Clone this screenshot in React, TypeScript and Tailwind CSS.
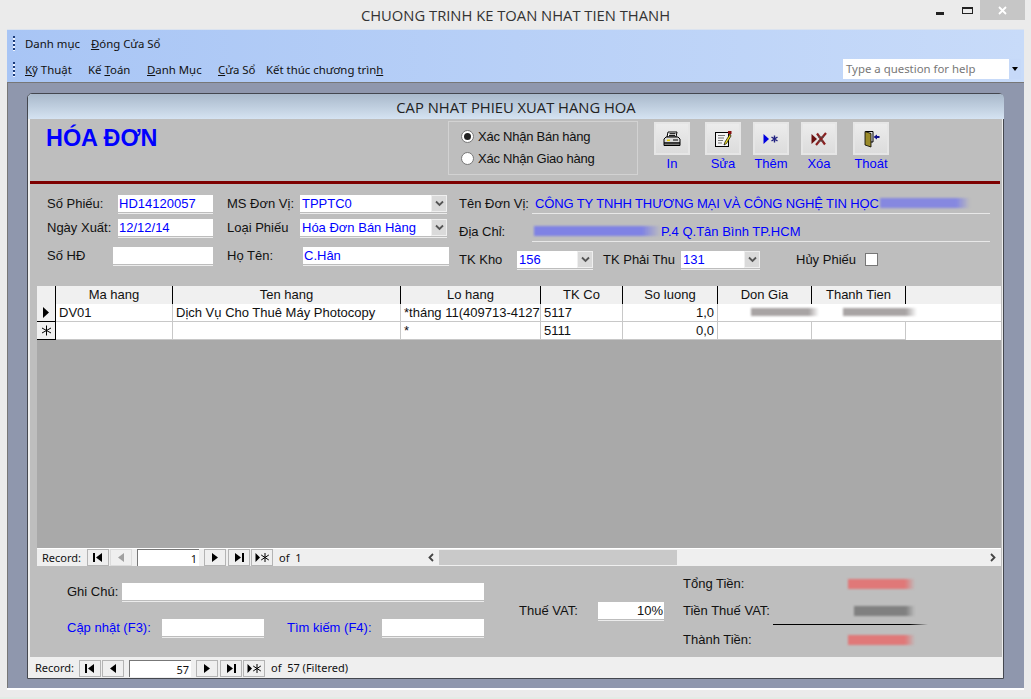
import React from "react";

const Field = ({ w, value, right, dark }: { w: number; value?: string; right?: boolean; dark?: boolean }) => (
  <div className="shrink-0" style={{ width: w }}>
    <div className={`h-[17px] bg-white px-[1px] leading-[17px] overflow-hidden whitespace-nowrap ${dark ? "text-[#111]" : "text-[#0000ff]"} ${right ? "text-right" : ""}`}>{value}</div>
    <div className="h-[1px] bg-[#bdbdbd]" />
    <div className="h-[1px] bg-[#ececec]" />
  </div>
);

const Combo = ({ w, value }: { w: number; value: string }) => (
  <div className="shrink-0" style={{ width: w }}>
    <div className="h-[17px] bg-white flex justify-between text-[#0000ff] leading-[17px]">
      <span className="pl-[2px] overflow-hidden whitespace-nowrap">{value}</span>
      <span className="w-[16px] h-[17px] bg-[#dadada] border border-[#efefef] flex items-center justify-center shrink-0">
        <svg width="9" height="7" viewBox="0 0 9 7"><path d="M1 1.5 L4.5 5 L8 1.5" fill="none" stroke="#555" strokeWidth="1.8" /></svg>
      </span>
    </div>
    <div className="h-[1px] bg-[#bdbdbd]" />
    <div className="h-[1px] bg-[#ececec]" />
  </div>
);

const NavIcon = ({ kind, dim }: { kind: string; dim?: boolean }) => {
  const c = dim ? "#a0a0a0" : "#000";
  return (
    <svg width="14" height="11" viewBox="0 0 14 11">
      {kind === "first" && <><rect x="2" y="1" width="2" height="9" fill={c} /><path d="M11 1 L5 5.5 L11 10 Z" fill={c} /></>}
      {kind === "prev" && <path d="M10 1 L4 5.5 L10 10 Z" fill={c} />}
      {kind === "next" && <path d="M4 1 L10 5.5 L4 10 Z" fill={c} />}
      {kind === "last" && <><path d="M3 1 L9 5.5 L3 10 Z" fill={c} /><rect x="10" y="1" width="2" height="9" fill={c} /></>}
      {kind === "new" && <><path d="M0.5 1 L5 5.5 L0.5 10 Z" fill={c} /><path d="M10 1 V10 M6.2 3 L13.8 8 M13.8 3 L6.2 8" stroke={c} strokeWidth="1" /></>}
    </svg>
  );
};

const NavBtn = ({ kind, dim, bare }: { kind: string; dim?: boolean; bare?: boolean }) => (
  <div className={`w-[22px] h-[17px] shrink-0 border bg-[#efefef] flex items-center justify-center ${bare ? "border-[#dcdcdc]" : "border-[#b4b4b4]"}`}>
    <NavIcon kind={kind} dim={dim} />
  </div>
);

const Nav = ({ cur, of, dim, labelW }: { cur: string; of: string; dim?: boolean; labelW: number }) => (
  <div className="flex items-center text-[11px] text-[#111]" style={{ fontFamily: '"Noto Sans", sans-serif' }}>
    <span className="shrink-0 whitespace-nowrap" style={{ width: labelW }}>Record:</span>
    <NavBtn kind="first" />
    <div className="w-[1px]" />
    <NavBtn kind="prev" dim={dim} bare={dim} />
    <div className="w-[5px]" />
    <div className="w-[62px] h-[17px] bg-white border-l border-t border-[#777] text-right pr-[2px] leading-[18px]">{cur}</div>
    <div className="w-[5px]" />
    <NavBtn kind="next" />
    <div className="w-[2px]" />
    <NavBtn kind="last" />
    <div className="w-[1px]" />
    <NavBtn kind="new" />
    <span className="ml-[6px] whitespace-pre">{of}</span>
  </div>
);

const Smear = ({ w, h, c, ml = 0, mt = 0 }: { w: number; h: number; c: string; ml?: number; mt?: number }) => (
  <div
    className="blur-[1px] shrink-0"
    style={{ width: w, height: h, marginLeft: ml, marginTop: mt, background: `linear-gradient(to right, ${c}, ${c} 85%, transparent)` }}
  />
);

const ToolBtn = ({ label, ml, children }: { label: string; ml: number; children: React.ReactNode }) => (
  <div className="w-[36px] shrink-0 flex flex-col items-center" style={{ marginLeft: ml }}>
    <div className="w-[36px] h-[33px] border-2 border-[#e6e6e6] bg-gradient-to-b from-[#ececec] to-[#dcdcdc] flex items-center justify-center">{children}</div>
    <span className="text-[#0000ff] mt-[1px] leading-[16px] whitespace-nowrap">{label}</span>
  </div>
);

const Grip = () => (
  <div className="w-[2px] h-[15px] mr-[10px] shrink-0 bg-[repeating-linear-gradient(to_bottom,#1a3a7a_0px,#1a3a7a_2px,#eef3ff_2px,#eef3ff_4px)]" />
);

const cols = "grid grid-cols-[19px_117px_228px_140px_82px_95px_94px_94px_95px]";

const Cell = ({ children, right }: { children?: React.ReactNode; right?: boolean }) => (
  <div className={`border-r border-b border-[#c8c8c8] px-[3px] overflow-hidden whitespace-nowrap ${right ? "text-right" : ""}`}>{children}</div>
);

const Head = ({ children, last }: { children?: React.ReactNode; last?: boolean }) => (
  <div className={`text-center bg-[#f0f0f0] ${last ? "" : "border-r border-black"}`}>{children}</div>
);

export default function App() {
  return (
    <div className="w-[1031px] h-[699px] overflow-hidden bg-[#ebebeb] text-black" style={{ fontFamily: '"Liberation Sans", sans-serif' }}>
      {/* title bar */}
      <div className="h-[29px] relative flex justify-center items-center text-[#333] text-[14.75px]" style={{ fontFamily: '"Open Sans", sans-serif' }}>
        <span className="pt-[1px]">CHUONG TRINH KE TOAN NHAT TIEN THANH</span>
        <div className="absolute right-[6px] top-0 flex items-start">
          <div className="w-[8px] h-[3px] bg-[#222] mt-[12px] mr-[18px]" />
          <div className="w-[11px] h-[7px] border border-[#222] border-t-2 mt-[7px] mr-[7px]" />
          <div className="w-[45px] h-[20px] bg-[#c6c6c6] flex items-center justify-center">
            <svg width="9" height="9" viewBox="0 0 9 9"><path d="M1 1 L8 8 M8 1 L1 8" stroke="#fff" strokeWidth="1.8" /></svg>
          </div>
        </div>
      </div>

      {/* toolbars */}
      <div className="mx-[7px] h-[54px] bg-gradient-to-r from-[#a8c5f5] to-[#c8dbf9] border-t border-[#dbe3ef] border-b border-b-[#777] text-[11.4px] text-[#111]" style={{ fontFamily: '"Noto Sans", sans-serif' }}>
        <div className="h-[27px] flex items-center pl-[6px]">
          <Grip />
          <div className="flex gap-[11px] pt-[1px]">
            <span>Danh mục</span>
            <span><u>Đ</u>óng Cửa Sổ</span>
          </div>
        </div>
        <div className="h-[25px] flex items-center pl-[6px] relative">
          <Grip />
          <div className="flex pt-[1px] whitespace-nowrap">
            <span className="w-[63px]"><u>K</u>ỹ Thuật</span>
            <span className="w-[59px]">Kế <u>T</u>oán</span>
            <span className="w-[71px]"><u>D</u>anh Mục</span>
            <span className="w-[48px]"><u>C</u>ửa Sổ</span>
            <span>Kết thúc chương trìn<u>h</u></span>
          </div>
          <div className="absolute right-[3px] top-[2px] w-[178px] h-[20px] bg-white flex justify-between text-[#777] pl-[3px] leading-[19px]">
            <span>Type a question for help</span>
            <span className="w-[12px] bg-[#c6d9f8] flex items-center justify-center">
              <svg width="6" height="4" viewBox="0 0 6 4"><path d="M0 0 H6 L3 4 Z" fill="#000" /></svg>
            </span>
          </div>
        </div>
      </div>

      {/* MDI client */}
      <div className="mx-[7px] h-[605px] bg-[#8f97ad] border-l border-[#777] pt-[10px] pl-[19px]">
        <div className="w-[977px] h-[586px] border border-[#44474f] rounded-t-[5px] bg-[#eeeeee] flex flex-col pl-[2px] pr-[1px] text-[13px] text-[#111]">
          <div className="h-[25px] -mx-[2px] rounded-t-[4px] bg-gradient-to-b from-[#a9b9cb] to-[#d5e3f2] text-center text-[14.75px] leading-[26px] text-[#222] shrink-0" style={{ fontFamily: '"Open Sans", sans-serif' }}>
            CAP NHAT PHIEU XUAT HANG HOA
          </div>

          <div className="bg-[#bebebe] h-[538px] shrink-0 flex flex-col">
            {/* header */}
            <div className="h-[62px] flex pt-[2px] shrink-0">
              <div className="w-[418px] pl-[16px] pt-[3px] text-[23.4px] font-bold text-[#0000ff] leading-[28px] shrink-0">HÓA ĐƠN</div>
              <div className="w-[190px] h-[54px] border border-[#d2d2d2] shrink-0 pl-[12px] pt-[6px] flex flex-col gap-[5px]">
                <div className="flex items-center gap-[4px] h-[17px]">
                  <div className="w-[13px] h-[13px] rounded-full bg-white border border-[#777] flex items-center justify-center"><div className="w-[7px] h-[7px] rounded-full bg-[#222]" /></div>
                  <span className="tracking-[-0.24px] pt-[1px] whitespace-nowrap">Xác Nhận Bán hàng</span>
                </div>
                <div className="flex items-center gap-[4px] h-[17px]">
                  <div className="w-[13px] h-[13px] rounded-full bg-white border border-[#777]" />
                  <span className="tracking-[-0.24px] pt-[1px] whitespace-nowrap">Xác Nhận Giao hàng</span>
                </div>
              </div>
              <div className="flex pt-[1px]">
                <ToolBtn label="In" ml={16}>
                  <svg width="18" height="16" viewBox="0 0 18 16">
                    <path d="M5 1 H14 L13 6 H4 Z" fill="#fff" stroke="#000" />
                    <path d="M6.5 2.7 H12.5 M6 4.4 H12" stroke="#000" />
                    <path d="M1 8 L3 6 H15 L17 8 V12 H1 Z" fill="#dcdcdc" stroke="#000" />
                    <rect x="4" y="8.5" width="3" height="1.6" fill="#e8d000" />
                    <path d="M10 9 H15" stroke="#000" />
                    <path d="M1 12 H17 V14.5 H1 Z" fill="#777" stroke="#000" />
                  </svg>
                </ToolBtn>
                <ToolBtn label="Sửa" ml={15}>
                  <svg width="18" height="18" viewBox="0 0 18 18">
                    <rect x="1.5" y="2.5" width="13" height="14" fill="#f4f4f4" stroke="#000" />
                    <path d="M4 5.5 H11 M4 8 H10 M4 10.5 H9 M4 13 H8" stroke="#777" />
                    <path d="M16 4 L11 12 L10 15 L12.5 13.5 L17 6 Z" fill="#f0e020" stroke="#000" strokeWidth="0.7" />
                    <rect x="14" y="1" width="3.5" height="3" fill="#8a1010" />
                  </svg>
                </ToolBtn>
                <ToolBtn label="Thêm" ml={12}>
                  <svg width="16" height="10" viewBox="0 0 16 10">
                    <path d="M0.5 0 L6 5 L0.5 10 Z" fill="#0000e0" />
                    <path d="M11.5 1.5 V8.5 M8.5 3 L14.5 7 M14.5 3 L8.5 7" stroke="#202080" strokeWidth="1.4" />
                  </svg>
                </ToolBtn>
                <ToolBtn label="Xóa" ml={12}>
                  <svg width="16" height="14" viewBox="0 0 16 14">
                    <path d="M0.5 2 L6 7 L0.5 12 Z" fill="#6a0f0f" />
                    <path d="M6 1.5 L14 12.5 M15 1 L5 13" stroke="#8a2020" strokeWidth="2.2" />
                    <path d="M7 5 H13 M7 9 H12" stroke="#505050" strokeWidth="1" />
                  </svg>
                </ToolBtn>
                <ToolBtn label="Thoát" ml={16}>
                  <svg width="18" height="18" viewBox="0 0 18 18">
                    <path d="M3.5 1.5 H11 V12 H9" fill="none" stroke="#000" />
                    <path d="M3 1.5 L9 3.5 V17 L3 15 Z" fill="#9a8a2a" stroke="#000" strokeWidth="0.8" />
                    <path d="M11.5 7 L15 4.5 V6 H17.5 V8 H15 V9.5 Z" fill="#10108a" />
                  </svg>
                </ToolBtn>
              </div>
            </div>
            {/* red rule */}
            <div className="h-[3px] bg-[#7d0000] mr-[2px] shrink-0" />

            {/* fields */}
            <div className="h-[102px] shrink-0 flex pl-[17px] pt-[11px] leading-[18px]">
              <div className="w-[412px] shrink-0 flex flex-col">
                <div className="flex items-start h-[24px]">
                  <span className="w-[71px]">Số Phiếu:</span>
                  <Field w={95} value="HD14120057" />
                  <span className="ml-[14px] w-[73px] whitespace-nowrap">MS Đơn Vị:</span>
                  <Combo w={147} value="TPPTC0" />
                </div>
                <div className="flex items-start h-[28px]">
                  <span className="w-[71px]">Ngày Xuất:</span>
                  <Field w={95} value="12/12/14" />
                  <span className="ml-[14px] w-[73px]">Loại Phiếu</span>
                  <Combo w={147} value="Hóa Đơn Bán Hàng" />
                </div>
                <div className="flex items-start">
                  <span className="w-[66px]">Số HĐ</span>
                  <Field w={100} />
                  <span className="ml-[14px] w-[76px]">Họ Tên:</span>
                  <Field w={146} value="C.Hân" />
                </div>
              </div>
              <div className="flex flex-col">
                <div className="flex h-[28px]">
                  <span className="w-[73px] whitespace-nowrap">Tên Đơn Vị:</span>
                  <div className="w-[458px] h-[19px] border-b border-[#e8e8e8] flex items-start text-[#0000ff] leading-[17px] pl-[3px]">
                    <span className="whitespace-nowrap tracking-[-0.12px]">CÔNG TY TNHH THƯƠNG MẠI VÀ CÔNG NGHỆ TIN HỌC</span>
                    <Smear w={90} h={10} c="#8688e0" ml={1} mt={3} />
                  </div>
                </div>
                <div className="flex h-[28px]">
                  <span className="w-[73px]">Địa Chỉ:</span>
                  <div className="w-[458px] h-[19px] border-b border-[#e8e8e8] flex items-start text-[#0000ff] leading-[17px] pl-[2px]">
                    <Smear w={127} h={10} c="#7f82e4" mt={3} />
                    <span className="whitespace-nowrap">P.4 Q.Tân Bình TP.HCM</span>
                  </div>
                </div>
                <div className="flex items-start">
                  <span className="w-[58px]">TK Kho</span>
                  <Combo w={76} value="156" />
                  <span className="ml-[10px] w-[78px] whitespace-nowrap">TK Phải Thu</span>
                  <Combo w={79} value="131" />
                  <span className="ml-[36px] w-[69px] whitespace-nowrap">Hủy Phiếu</span>
                  <div className="w-[13px] h-[13px] bg-white border border-[#777] mt-[2px]" />
                </div>
              </div>
            </div>

            {/* datasheet */}
            <div className="ml-[7px] w-[964px] shrink-0 leading-[18px]">
              <div className={`${cols} h-[18px] border-b-2 border-black`}>
                <Head />
                <Head>Ma hang</Head>
                <Head>Ten hang</Head>
                <Head>Lo hang</Head>
                <Head>TK Co</Head>
                <Head>So luong</Head>
                <Head>Don Gia</Head>
                <Head>Thanh Tien</Head>
                <Head last />
              </div>
              <div className={`${cols} h-[18px] bg-white`}>
                <div className="border-r border-b border-black bg-[#f0f0f0] flex items-center justify-center">
                  <svg width="8" height="11" viewBox="0 0 8 11"><path d="M1 0 L7 5.5 L1 11 Z" fill="#000" /></svg>
                </div>
                <Cell>DV01</Cell>
                <Cell>Dịch Vụ Cho Thuê Máy Photocopy</Cell>
                <Cell>*tháng 11(409713-412760</Cell>
                <Cell>5117</Cell>
                <Cell right>1,0</Cell>
                <div className="col-span-3 border-b border-[#c8c8c8] flex items-start pt-[4px]">
                  <Smear w={68} h={8} c="#a8a4a4" ml={33} />
                  <Smear w={74} h={8} c="#a8a4a4" ml={24} />
                </div>
              </div>
              <div className={`${cols} h-[18px] bg-white`}>
                <div className="border-r border-b border-black bg-[#f0f0f0] flex items-center justify-center">
                  <svg width="11" height="11" viewBox="0 0 11 11"><path d="M5.5 0.5 V10.5 M1 3 L10 8 M10 3 L1 8" stroke="#000" strokeWidth="1" /></svg>
                </div>
                <Cell />
                <Cell />
                <Cell>*</Cell>
                <Cell>5111</Cell>
                <Cell right>0,0</Cell>
                <Cell />
                <Cell />
                <div />
              </div>
              <div className="h-[208px] bg-[#a9a9a9]" />
              <div className="h-[18px] bg-[#efefef] flex items-center pl-[5px] border-t border-white">
                <div className="w-[383px] shrink-0"><Nav cur="1" of="of  1" dim labelW={45} /></div>
                <div className="flex-1 h-[15px] flex items-center">
                  <svg className="ml-[1px] w-[12px] shrink-0" width="12" height="9" viewBox="0 0 12 9"><path d="M7 1 L3.5 4.5 L7 8" fill="none" stroke="#444" strokeWidth="1.8" /></svg>
                  <div className="w-[238px] h-[15px] bg-[#c9c9c9] ml-[1px] shrink-0" />
                  <div className="flex-1" />
                  <svg className="mr-[3px] w-[12px] shrink-0" width="12" height="9" viewBox="0 0 12 9"><path d="M5 1 L8.5 4.5 L5 8" fill="none" stroke="#444" strokeWidth="1.8" /></svg>
                </div>
              </div>
            </div>

            {/* footer */}
            <div className="flex-1 flex leading-[18px]">
              <div className="w-[455px] pl-[37px] pt-[17px] shrink-0">
                <div className="flex items-start h-[36px]">
                  <span className="w-[55px]">Ghi Chú:</span>
                  <Field w={362} />
                </div>
                <div className="flex items-start">
                  <span className="w-[95px] text-[#0000ff] whitespace-nowrap">Cập nhật (F3):</span>
                  <Field w={102} />
                  <span className="ml-[23px] w-[95px] text-[#0000ff] whitespace-nowrap">Tìm kiếm (F4):</span>
                  <Field w={102} />
                </div>
              </div>
              <div className="w-[198px] pl-[34px] pt-[36px] shrink-0 flex items-start">
                <span className="w-[79px]">Thuế VAT:</span>
                <Field w={66} value="10%" right dark />
              </div>
              <div className="pt-[9px] flex-1">
                <div className="flex items-center h-[17px]">
                  <span className="w-[165px]">Tổng Tiền:</span>
                  <Smear w={67} h={10} c="#e07878" />
                </div>
                <div className="flex items-center h-[17px] mt-[10px]">
                  <span className="w-[171px] whitespace-nowrap">Tiền Thuế VAT:</span>
                  <Smear w={61} h={10} c="#808080" />
                </div>
                <div className="h-[1px] w-[155px] ml-[90px] mt-[5px] bg-gradient-to-r from-black from-88% to-transparent" />
                <div className="flex items-center h-[17px] mt-[6px]">
                  <span className="w-[165px]">Thành Tiền:</span>
                  <Smear w={67} h={10} c="#e07878" />
                </div>
              </div>
            </div>
          </div>

          {/* outer nav */}
          <div className="bg-[#efefef] flex items-center pl-[5px] pt-[1px] flex-1">
            <Nav cur="57" of="of  57 (Filtered)" labelW={44} />
          </div>
        </div>
      </div>

      {/* bottom edge */}
      <div className="mx-[7px] h-[2px] bg-white" />
      <div className="h-[7px]" />
      <div className="h-[2px] bg-[#e3ece6]" />
    </div>
  );
}
